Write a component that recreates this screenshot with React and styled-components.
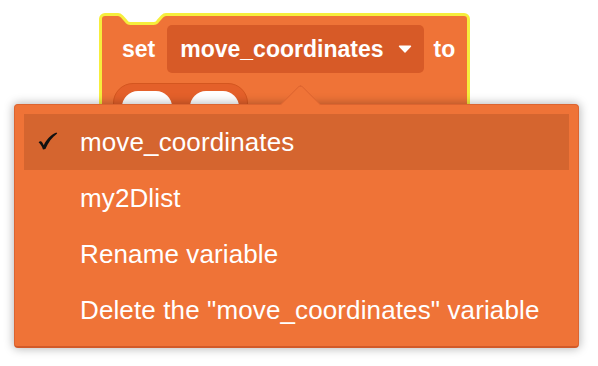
import React from "react";
import styled, { createGlobalStyle } from "styled-components";

const GlobalStyle = createGlobalStyle`
  html, body {
    margin: 0;
    padding: 0;
    background: #ffffff;
  }
  body {
    font-family: "Liberation Sans", Arial, Helvetica, sans-serif;
  }
`;

const Page = styled.div`
  position: relative;
  width: 598px;
  height: 366px;
  overflow: hidden;
  padding: 13px 0 0 99px;
  box-sizing: border-box;
`;

const Block = styled.div`
  position: relative;
  width: 371px;
  box-sizing: border-box;
  background: #ef7337;
  border: 3px solid #f6ee3c;
  border-radius: 6px;
  padding: 9px 10px 14px 20px;
  display: flex;
  flex-direction: column;
  gap: 10px;
`;

const Notch = styled.svg`
  position: absolute;
  left: -3px;
  top: -3px;
`;

const BlockRow = styled.div`
  display: flex;
  align-items: center;
  gap: 10px;
`;

const Label = styled.span`
  color: #ffffff;
  font-weight: 700;
  font-size: 23px;
  line-height: 1;
`;

const Field = styled.div`
  display: flex;
  align-items: center;
  gap: 14px;
  height: 48px;
  margin-left: 2px;
  padding: 0 12px 0 13px;
  background: #d75a27;
  border-radius: 5px;
`;

const Reporter = styled.div`
  display: flex;
  gap: 18px;
  margin-left: -9px;
  width: 135px;
  height: 40px;
  box-sizing: border-box;
  padding: 7px 8px 0 8px;
  background: #e4602a;
  border: 1px solid #d4561f;
  border-radius: 20px;
`;

const Slot = styled.div`
  width: 50px;
  height: 32px;
  background: #ffffff;
  border-radius: 20px;
`;

const Menu = styled.div`
  position: absolute;
  left: 14px;
  top: 104px;
  width: 565px;
  height: 244px;
  box-sizing: border-box;
  padding: 9px;
  background: #ef7337;
  border: 1px solid #dc6430;
  border-bottom: 2px solid #d25a29;
  border-radius: 4px;
  box-shadow: 0 0 10px 1px rgba(0, 0, 0, 0.28);
`;

const MenuArrow = styled.div`
  position: absolute;
  left: 271px;
  top: -15px;
  width: 28px;
  height: 28px;
  background: #ef7337;
  border-top: 1px solid #dc6430;
  border-left: 1px solid #dc6430;
  border-top-left-radius: 4px;
  transform: rotate(45deg);
`;

const MenuList = styled.div`
  position: relative;
  display: flex;
  flex-direction: column;
`;

const MenuItem = styled.div`
  position: relative;
  display: flex;
  align-items: center;
  height: 56px;
  padding-left: 56px;
  color: #ffffff;
  font-size: 26px;
  letter-spacing: 0.12px;
  background: ${(p) => (p.$selected ? "#d5652f" : "transparent")};
`;

const Check = styled.svg`
  position: absolute;
  left: 14px;
  top: 18px;
`;

const CaretIcon = () => (
  <svg width="14" height="8" viewBox="0 0 14 8">
    <path
      d="M1.5 1.2 H12.5 L7 7 Z"
      fill="#ffffff"
      stroke="#ffffff"
      strokeWidth="1.4"
      strokeLinejoin="round"
    />
  </svg>
);

const items = [
  "move_coordinates",
  "my2Dlist",
  "Rename variable",
  'Delete the "move_coordinates" variable',
];

export default function App() {
  return (
    <>
      <GlobalStyle />
      <Page>
        <Block>
          <Notch width="90" height="16" viewBox="0 0 90 16">
            <path
              d="M19 0 L19 1.5 C21 1.5 22 2.5 23 3.5 L27 8 C28 9.5 29.5 10.5 31.5 10.5 H54.5 C56.5 10.5 58 9.5 59 8 L63 3.5 C64 2.5 65 1.5 67 1.5 L67 0 Z"
              fill="#ffffff"
            />
            <path
              d="M16 1.5 H19 C21 1.5 22 2.5 23 3.5 L27 8 C28 9.5 29.5 10.5 31.5 10.5 H54.5 C56.5 10.5 58 9.5 59 8 L63 3.5 C64 2.5 65 1.5 67 1.5 H70"
              fill="none"
              stroke="#f6ee3c"
              strokeWidth="3"
            />
          </Notch>
          <BlockRow>
            <Label>set</Label>
            <Field>
              <Label>move_coordinates</Label>
              <CaretIcon />
            </Field>
            <Label>to</Label>
          </BlockRow>
          <Reporter>
            <Slot />
            <Slot />
          </Reporter>
        </Block>

        <Menu>
          <MenuArrow />
          <MenuList>
            {items.map((label, i) => (
              <MenuItem key={label} $selected={i === 0}>
                {i === 0 && (
                  <Check width="20" height="18" viewBox="0 0 20 18">
                    <path
                      d="M0.6 10.2 C2.2 8.6 3.6 9.2 4.6 11 L5.8 13.2 C8.4 7.8 12.2 3.2 18.4 0.6 L19.2 1.6 C13.8 5.4 10.2 10.8 7.4 17 L5 17.4 C4 14.6 2.6 11.8 0.6 10.2 Z"
                      fill="#111111"
                    />
                  </Check>
                )}
                {label}
              </MenuItem>
            ))}
          </MenuList>
        </Menu>
      </Page>
    </>
  );
}
